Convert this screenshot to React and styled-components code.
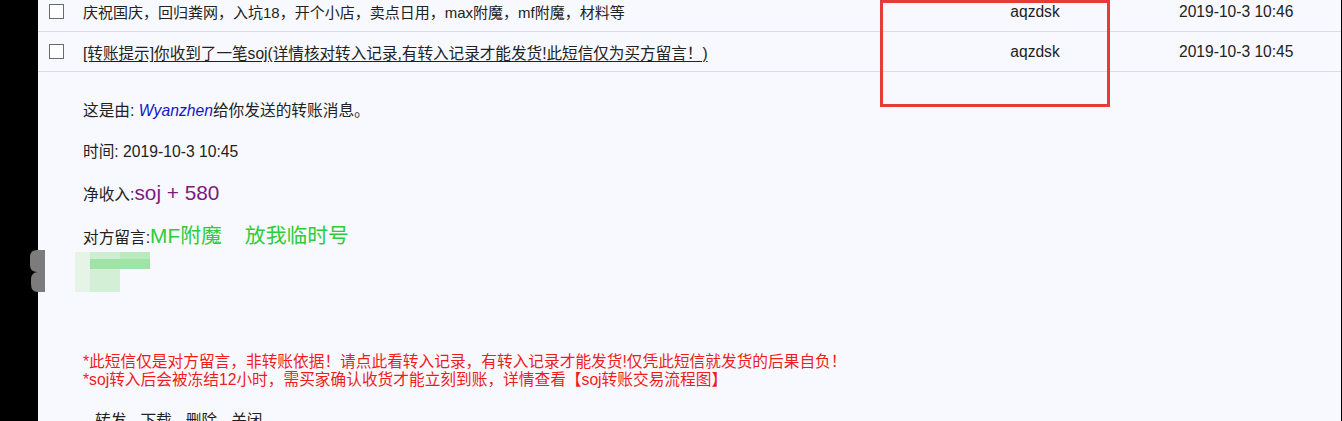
import React from 'react'
import styled, { createGlobalStyle } from 'styled-components'

const GlobalStyle = createGlobalStyle`
  html, body {
    margin: 0;
    padding: 0;
    background: #000;
  }
  body {
    font-family: "Liberation Sans", Arial, "Noto Sans CJK SC", sans-serif;
    color: #222;
  }
`

const Page = styled.div`
  position: relative;
  display: flex;
  width: 1342px;
  height: 421px;
  overflow: hidden;
  background: #000;
`

const Gutter = styled.div`
  flex: 0 0 ${p => p.$w}px;
  background: #000;
`

const Main = styled.main`
  flex: 1;
  background: #f7f9fe;
  overflow: hidden;
`

const List = styled.div`
  margin-top: -8px;
`

const Row = styled.div`
  display: grid;
  grid-template-columns: 45px 1fr 150px 231px;
  align-items: center;
  height: 39px;
  border-bottom: 1px solid #d8dde8;
  font-size: 15.6px;
`

const CheckCell = styled.div`
  padding-left: 11px;
  display: flex;
  align-items: center;
`

const Box = styled.span`
  width: 13px;
  height: 13px;
  border: 1.5px solid #6a6a6a;
  background: #fff;
`

const Subject = styled.div`
  white-space: nowrap;
  color: #222;
  font-size: ${p => (p.$link ? '15.6px' : '15px')};
  text-decoration: ${p => (p.$link ? 'underline' : 'none')};
  text-underline-offset: 2px;
`

const Sender = styled.div`
  text-align: center;
`

const DateCell = styled.div`
  padding-left: 69px;
`

const Detail = styled.section`
  padding: 28px 0 0 45px;
`

const Lines = styled.div`
  display: flex;
  flex-direction: column;
  gap: 19px;
`

const Line = styled.p`
  margin: 0;
  font-size: 15.7px;
  line-height: 22px;
  white-space: nowrap;
`

const Sender2 = styled.span`
  color: #1515c8;
  font-style: italic;
`

const Big = styled.span`
  font-size: 20.8px;
  color: ${p => p.$color};
`

const Mosaic = styled.svg`
  display: block;
  margin: 3px 0 0 -8px;
`

const Notice = styled.div`
  margin-top: 61px;
  color: #f01c1c;
  font-size: 15.7px;
  line-height: 18px;
  white-space: nowrap;
`

const Actions = styled.nav`
  display: flex;
  gap: 14px;
  margin-top: 21px;
  padding-left: 12px;
  font-size: 15.7px;
  line-height: 22px;
`

const Action = styled.span`
  color: #222;
`

const Highlight = styled.div`
  position: absolute;
  left: 880px;
  top: 0;
  width: 230px;
  height: 107px;
  box-sizing: border-box;
  border: 3px solid #e53b3b;
  pointer-events: none;
`

const Blob = styled.svg`
  position: absolute;
  left: 30px;
  top: 250px;
`

const rows = [
  {
    subject: '庆祝国庆，回归粪网，入坑18，开个小店，卖点日用，max附魔，mf附魔，材料等',
    sender: 'aqzdsk',
    date: '2019-10-3 10:46',
  },
  {
    subject: '[转账提示]你收到了一笔soj(详情核对转入记录,有转入记录才能发货!此短信仅为买方留言！)',
    sender: 'aqzdsk',
    date: '2019-10-3 10:45',
    link: true,
  },
]

export default function App() {
  return (
    <Page>
      <GlobalStyle />
      <Gutter $w={38} />
      <Main>
        <List>
          {rows.map((r, i) => (
            <Row key={i}>
              <CheckCell><Box /></CheckCell>
              <Subject $link={r.link}>{r.subject}</Subject>
              <Sender>{r.sender}</Sender>
              <DateCell>{r.date}</DateCell>
            </Row>
          ))}
        </List>

        <Detail>
          <Lines>
            <Line>这是由: <Sender2>Wyanzhen</Sender2>给你发送的转账消息。</Line>
            <Line>时间: 2019-10-3 10:45</Line>
            <Line>净收入:<Big $color="#7d1a7d">soj + 580</Big></Line>
            <Line>对方留言:<Big $color="#2ecc3a">MF附魔&nbsp;&nbsp;&nbsp;&nbsp;放我临时号</Big></Line>
          </Lines>

          {/* blurred screenshot fragment */}
          <Mosaic width="75" height="40" viewBox="0 0 75 40">
            <rect x="0" y="0" width="15" height="40" fill="#e6f3e7" />
            <rect x="15" y="0" width="30" height="7" fill="#cdeed0" />
            <rect x="45" y="0" width="30" height="7" fill="#b9e9bd" />
            <rect x="15" y="7" width="60" height="10" fill="#9fe3a6" />
            <rect x="15" y="17" width="30" height="23" fill="#d3efd5" />
          </Mosaic>

          <Notice>
            *此短信仅是对方留言，非转账依据！请点此看转入记录，有转入记录才能发货!仅凭此短信就发货的后果自负！
            <br />
            *soj转入后会被冻结12小时，需买家确认收货才能立刻到账，详情查看【soj转账交易流程图】
          </Notice>

          <Actions>
            <Action>转发</Action>
            <Action>下载</Action>
            <Action>删除</Action>
            <Action>关闭</Action>
          </Actions>
        </Detail>
      </Main>
      <Gutter $w={1} />

      <Highlight />
      <Blob width="15" height="42" viewBox="0 0 15 42">
        <path d="M7 0 H15 V22 H7 Q0 22 0 15 V7 Q0 0 7 0 Z" fill="#7c7c7c" />
        <path d="M8 22 H15 V42 H8 Q1 42 1 34 V30 Q1 22 8 22 Z" fill="#7c7c7c" />
      </Blob>
    </Page>
  )
}
